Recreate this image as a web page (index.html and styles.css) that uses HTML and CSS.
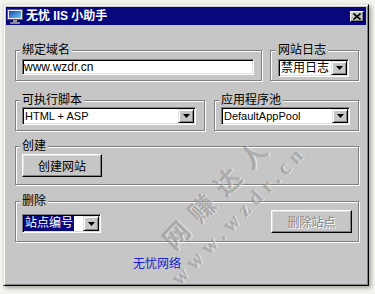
FILE: index.html
```html
<!DOCTYPE html>
<html lang="zh-CN">
<head>
    <meta charset="UTF-8">
    <title>无忧 IIS 小助手</title>
    <link rel="stylesheet" href="styles.css">
</head>
<body>
<div class="screen">
    <div class="window">
        <div class="titlebar">
            <svg class="app-icon" width="16" height="16" viewBox="0 0 16 16">
                <defs>
                    <linearGradient id="scr" x1="0" y1="0" x2="1" y2="1">
                        <stop offset="0" stop-color="#1846b0"/>
                        <stop offset="1" stop-color="#70c8f4"/>
                    </linearGradient>
                </defs>
                <rect x="0.5" y="1.5" width="15" height="10" fill="#e8e8e8" stroke="#5a5a5a"/>
                <rect x="2" y="3" width="12" height="7" fill="url(#scr)"/>
                <rect x="6" y="12" width="4" height="2" fill="#9a9a9a"/>
                <rect x="3.25" y="14.25" width="9.5" height="1.5" fill="#dcdcdc" stroke="#6a6a6a" stroke-width="0.5"/>
            </svg>
            <span class="title">无忧 IIS 小助手</span>
            <span class="close">
                <svg width="8" height="7" viewBox="0 0 8 7"><path d="M0.5 0.5L7.5 6.5M7.5 0.5L0.5 6.5" stroke="#000" stroke-width="1.6"/></svg>
            </span>
        </div>
        <div class="client">
            <div class="row r1">
                <fieldset class="group g-domain">
                    <legend>绑定域名</legend>
                    <div class="textbox">www.wzdr.cn</div>
                </fieldset>
                <fieldset class="group g-log">
                    <legend>网站日志</legend>
                    <div class="combo c-log">
                        <span class="value">禁用日志</span>
                        <span class="drop"><svg width="7" height="4" viewBox="0 0 7 4"><path d="M0 0h7L3.5 4z"/></svg></span>
                    </div>
                </fieldset>
            </div>
            <div class="row r2">
                <fieldset class="group g-script">
                    <legend>可执行脚本</legend>
                    <div class="combo c-script">
                        <span class="value latin">HTML + ASP</span>
                        <span class="drop"><svg width="7" height="4" viewBox="0 0 7 4"><path d="M0 0h7L3.5 4z"/></svg></span>
                    </div>
                </fieldset>
                <fieldset class="group g-pool">
                    <legend>应用程序池</legend>
                    <div class="combo c-pool">
                        <span class="value latin">DefaultAppPool</span>
                        <span class="drop"><svg width="7" height="4" viewBox="0 0 7 4"><path d="M0 0h7L3.5 4z"/></svg></span>
                    </div>
                </fieldset>
            </div>
            <div class="row r3">
                <fieldset class="group g-create">
                    <legend>创建</legend>
                    <button class="btn btn-create">创建网站</button>
                </fieldset>
            </div>
            <div class="row r4">
                <fieldset class="group g-delete">
                    <legend>删除</legend>
                    <div class="delete-line">
                        <div class="combo c-id">
                            <span class="value"><span class="selected">站点编号</span></span>
                            <span class="drop"><svg width="7" height="4" viewBox="0 0 7 4"><path d="M0 0h7L3.5 4z"/></svg></span>
                        </div>
                        <button class="btn btn-delete" disabled>删除站点</button>
                    </div>
                </fieldset>
            </div>
            <a class="link">无忧网络</a>
        </div>
    </div>
    <div class="watermark">
        <div class="wm-cn">网赚达人</div>
        <div class="wm-en">www.wzdr.cn</div>
    </div>
</div>
</body>
</html>
```

FILE: styles.css
```css
*{
    box-sizing: border-box;
}
body{
    margin: 0;
    background: #f4f4ee;
    font-family: "Liberation Sans", "Noto Sans CJK SC", sans-serif;
    font-size: 12px;
}
.screen{
    position: relative;
    height: 294px;
    padding: 4px 0 0 3px;
    overflow: hidden;
}
.window{
    width: 366px;
    height: 282px;
    padding: 2px;
    background: #c6c6c6;
    border: 1px solid;
    border-color: #dfdfdf #000 #000 #dfdfdf;
    box-shadow: inset 1px 1px #fff, inset -1px -1px #808080, 2px 2px 4px rgba(0,0,0,.35);
}

/* title bar */
.titlebar{
    height: 18px;
    display: flex;
    align-items: center;
    padding: 0 2px 0 1px;
    background: #08087c;
    color: #fff;
    font-weight: bold;
}
.app-icon{
    display: block;
    margin-right: 3px;
}
.title{
    line-height: 18px;
}
.close{
    margin-left: auto;
    width: 14px;
    height: 11px;
    display: flex;
    align-items: center;
    justify-content: center;
    background: #c6c6c6;
    border: 1px solid;
    border-color: #fff #000 #000 #fff;
    box-shadow: inset -1px -1px #808080;
}
.close svg{
    display: block;
}

/* client area */
.client{
    padding-left: 9px;
}
.row{
    display: flex;
}
.r1{
    margin-top: 18px;
    gap: 8px;
}
.r2{
    margin-top: 12px;
    gap: 9px;
}
.r3{
    margin-top: 8px;
}
.r4{
    margin-top: 9px;
}
.group{
    margin: 0;
    min-width: 0;
    padding: 2px 6px 3px;
    border: 1px solid #808080;
    box-shadow: inset 1px 1px #fff, 1px 1px #fff;
}
.group legend{
    margin-left: -2px;
    padding: 0 2px;
    height: 14px;
    line-height: 14px;
    background: #c6c6c6;
    color: #000;
}
.g-domain{ width: 247px; }
.g-log{ width: 89px; padding-left: 7px; }
.g-script{ width: 190px; padding: 0 6px 5px; }
.g-pool{ width: 145px; padding: 0 6px 5px; }
.g-create{ width: 344px; padding: 1px 6px 7px; }
.g-delete{ width: 344px; padding: 2px 6px 8px; }

/* sunken controls */
.textbox, .combo{
    padding: 1px;
    background: #fff;
    border: 1px solid;
    border-color: #808080 #fff #fff #808080;
    box-shadow: inset 1px 1px #000, inset -1px -1px #dfdfdf;
}
.textbox{
    width: 232px;
    height: 16px;
    line-height: 12px;
    font-size: 12px;
}
.combo{
    display: flex;
    height: 18px;
}
.combo .value{
    flex: 1;
    padding-left: 1px;
    line-height: 14px;
    white-space: nowrap;
    overflow: hidden;
}
.combo .latin{
    font-size: 11px;
}
.drop{
    width: 16px;
    display: flex;
    align-items: center;
    justify-content: center;
    background: #c6c6c6;
    border: 1px solid;
    border-color: #dfdfdf #000 #000 #dfdfdf;
    box-shadow: inset 1px 1px #fff, inset -1px -1px #808080;
}
.drop svg{
    display: block;
}
.c-log{ width: 71px; }
.c-script{ width: 174px; }
.c-pool{ width: 129px; }
.c-id{
    width: 79px;
    height: 19px;
}
.c-id .value{
    padding-left: 0;
}
.selected{
    display: inline-block;
    height: 15px;
    padding: 0 1px;
    background: #08087c;
    color: #fff;
}

/* buttons */
.btn{
    display: block;
    height: 23px;
    padding: 0;
    font-family: "Liberation Sans", "Noto Sans CJK SC", sans-serif;
    font-size: 12px;
    color: #000;
    background: #c6c6c6;
    border: 1px solid;
    border-color: #fff #000 #000 #fff;
    box-shadow: inset -1px -1px #808080, inset 1px 1px #dfdfdf;
}
.btn-create{
    width: 80px;
}
.btn-delete{
    width: 81px;
    color: #8a8a8a;
    text-shadow: 1px 1px #fff;
}
.delete-line{
    display: flex;
    justify-content: space-between;
    align-items: flex-end;
    height: 23px;
}

.link{
    display: block;
    width: 48px;
    margin: 15px 0 0 118px;
    line-height: 14px;
    color: #1c1cc8;
}

/* watermark over the dialog */
.watermark{
    position: absolute;
    left: 224px;
    top: 204px;
    display: flex;
    flex-direction: column;
    align-items: center;
    transform: translate(-50%, -50%) rotate(-46deg);
    pointer-events: none;
    color: rgba(105,105,105,.42);
    text-shadow: 1px 1px rgba(255,255,255,.5);
    font-weight: bold;
    white-space: nowrap;
}
.wm-cn{
    font-family: "Noto Sans CJK SC", sans-serif;
    font-size: 26px;
    line-height: 30px;
    letter-spacing: 11px;
    margin-right: -11px;
}
.wm-en{
    font-family: "Liberation Serif", serif;
    font-size: 21px;
    line-height: 22px;
    margin-top: 6px;
    letter-spacing: 6px;
    margin-right: -6px;
}
```
